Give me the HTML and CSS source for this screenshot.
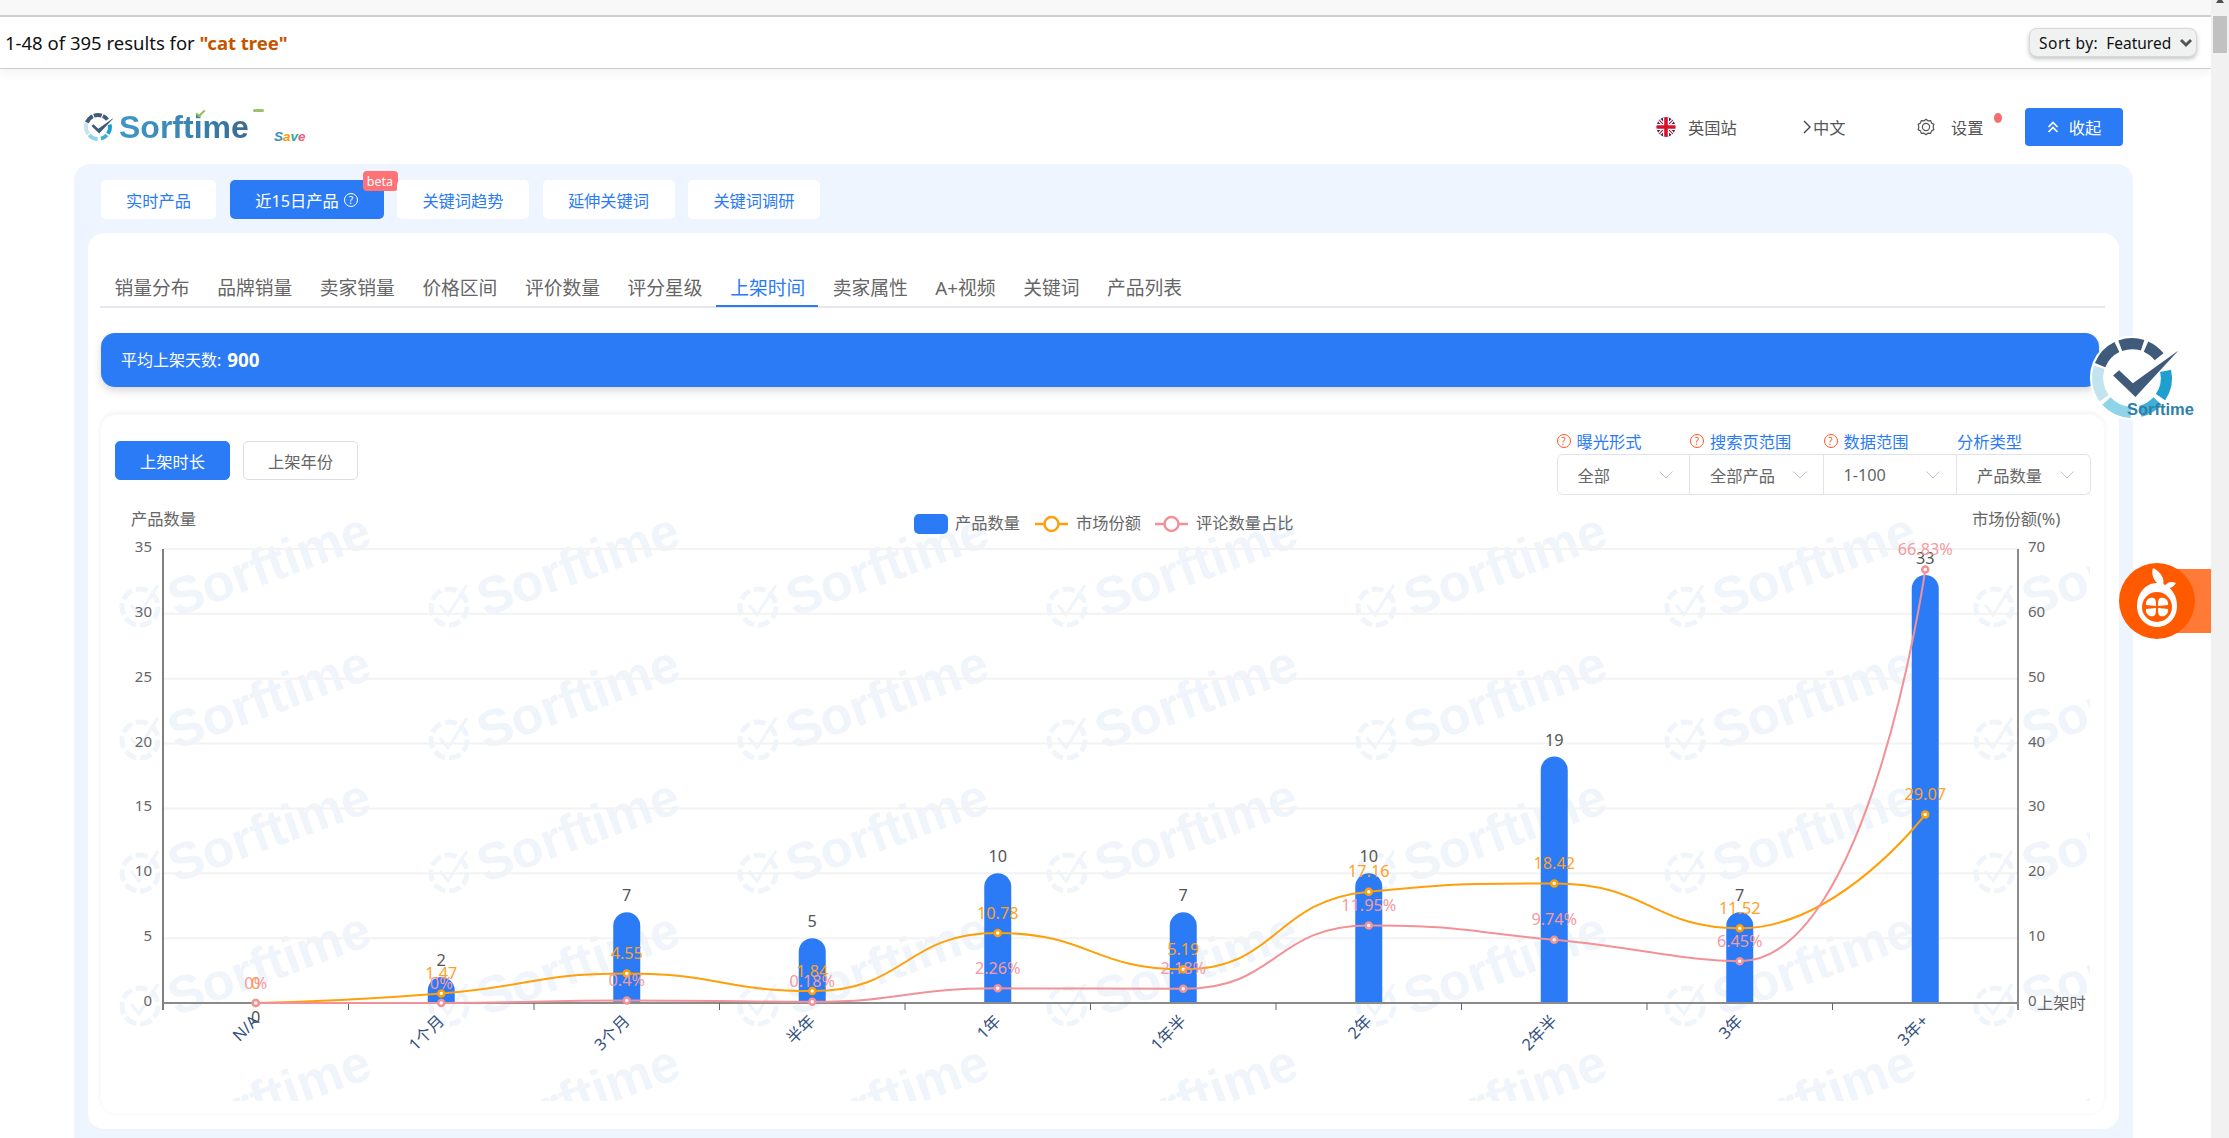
FILE: index.html
```html
<!DOCTYPE html>
<html lang="en">
<head>
  <meta charset="UTF-8">
  <title>Sorftime</title>
  <link rel="stylesheet" href="styles.css">
</head>
<body>

  <svg class="defs" width="0" height="0">
    <symbol id="ring" viewBox="0 0 100 100" overflow="visible">
      <g fill="none" stroke-width="13">
        <circle cx="50" cy="50" r="40" pathLength="360" stroke="#3f5a7a" stroke-dasharray="42 318" transform="rotate(202 50 50)"/>
        <circle cx="50" cy="50" r="40" pathLength="360" stroke="#3f5a7a" stroke-dasharray="38 322" transform="rotate(250 50 50)"/>
        <circle cx="50" cy="50" r="40" pathLength="360" stroke="#3f5a7a" stroke-dasharray="28 332" transform="rotate(294 50 50)"/>
        <circle cx="50" cy="50" r="40" pathLength="360" stroke="#1f9fcf" stroke-dasharray="46 314" transform="rotate(-12 50 50)"/>
        <circle cx="50" cy="50" r="40" pathLength="360" stroke="#41aed6" stroke-dasharray="34 326" transform="rotate(42 50 50)"/>
        <circle cx="50" cy="50" r="40" pathLength="360" stroke="#8fd3e8" stroke-dasharray="46 314" transform="rotate(92 50 50)"/>
        <circle cx="50" cy="50" r="40" pathLength="360" stroke="#c3e3ee" stroke-dasharray="54 306" transform="rotate(144 50 50)"/>
      </g>
      <path d="M28 47L35 41L51 56L104 18L54 72Z" fill="#3f5a7a"/>
    </symbol>
  </svg>

  <div class="page">
    <div class="top-strip"></div>

    <div class="result-bar">
      <span>1-48 of 395 results for <b class="keyword">"cat tree"</b></span>
      <div class="sort-box">
        <span class="sort-label">Sort by:</span><span>Featured</span>
        <svg width="14" height="10" viewBox="0 0 14 10"><polyline points="2,2 7,7 12,2" fill="none" stroke="#555" stroke-width="3"/></svg>
      </div>
    </div>

    <div class="plugin">
      <div class="plugin-head">
        <div class="logo">
          <svg class="logo-ring" width="30" height="30"><use href="#ring"/></svg>
          <span class="logo-text">Sorftime</span>
          <span class="logo-tick"></span>
          <span class="logo-dash"></span>
          <span class="logo-save"><i>S</i><i>a</i><i>v</i><i>e</i></span>
        </div>

        <div class="head-right">
          <div class="head-item site">
            <svg width="20" height="20" viewBox="0 0 20 20">
              <defs><clipPath id="flagClip"><ellipse cx="10" cy="10" rx="9.5" ry="10"/></clipPath></defs>
              <g clip-path="url(#flagClip)">
                <rect width="20" height="20" fill="#27306b"/>
                <path d="M0 0L20 20M20 0L0 20" stroke="#fff" stroke-width="3.6"/>
                <path d="M0 0L20 20M20 0L0 20" stroke="#d8112b" stroke-width="1.2"/>
                <path d="M10 0V20M0 10H20" stroke="#fff" stroke-width="6"/>
                <path d="M10 0V20M0 10H20" stroke="#d8112b" stroke-width="3.6"/>
              </g>
            </svg>
            <span>英国站</span>
          </div>
          <div class="head-item lang">
            <svg width="8" height="14" viewBox="0 0 8 14"><polyline points="1,1 7,7 1,13" fill="none" stroke="#444" stroke-width="1.4"/></svg>
            <span>中文</span>
          </div>
          <div class="head-item setting">
            <svg width="18" height="18" viewBox="0 0 18 18" fill="none" stroke="#555" stroke-width="1.2">
              <path d="M9 1.2L11 2.8L13.6 2.6L14.6 5L16.8 6.4L16.2 9L16.8 11.6L14.6 13L13.6 15.4L11 15.2L9 16.8L7 15.2L4.4 15.4L3.4 13L1.2 11.6L1.8 9L1.2 6.4L3.4 5L4.4 2.6L7 2.8Z"/>
              <circle cx="9" cy="9" r="3.6"/>
            </svg>
            <span>设置</span>
            <i class="red-dot"></i>
          </div>
          <button class="fold-btn">
            <svg width="12" height="14" viewBox="0 0 12 14"><path d="M1.5 7L6 2.5L10.5 7M1.5 12L6 7.5L10.5 12" fill="none" stroke="#fff" stroke-width="1.7"/></svg>
            收起
          </button>
        </div>
      </div>

      <div class="panel">
        <div class="main-tabs">
          <div class="main-tab w1">实时产品</div>
          <div class="main-tab active w2">近15日产品 <i class="q-icon white">?</i><span class="beta">beta</span></div>
          <div class="main-tab w3">关键词趋势</div>
          <div class="main-tab w3">延伸关键词</div>
          <div class="main-tab w3">关键词调研</div>
        </div>

        <div class="card">
          <div class="sub-tabs">
            <div class="sub-tab">销量分布</div>
            <div class="sub-tab">品牌销量</div>
            <div class="sub-tab">卖家销量</div>
            <div class="sub-tab">价格区间</div>
            <div class="sub-tab">评价数量</div>
            <div class="sub-tab">评分星级</div>
            <div class="sub-tab active">上架时间</div>
            <div class="sub-tab">卖家属性</div>
            <div class="sub-tab">A+视频</div>
            <div class="sub-tab">关键词</div>
            <div class="sub-tab">产品列表</div>
          </div>

          <div class="avg-bar">平均上架天数: <b>900</b></div>

          <div class="chart-card">
            <div class="chart-top">
              <div class="range-btns">
                <button class="range-btn active">上架时长</button>
                <button class="range-btn">上架年份</button>
              </div>
              <div class="filters">
                <div class="filter-label"><i class="q-icon">?</i>曝光形式</div>
                <div class="filter-label"><i class="q-icon">?</i>搜索页范围</div>
                <div class="filter-label"><i class="q-icon">?</i>数据范围</div>
                <div class="filter-label">分析类型</div>
                <div class="select"><span>全部</span><svg width="14" height="8" viewBox="0 0 14 8"><polyline points="0.5,0.5 7,7 13.5,0.5" fill="none" stroke="#c0c4cc"/></svg></div>
                <div class="select"><span>全部产品</span><svg width="14" height="8" viewBox="0 0 14 8"><polyline points="0.5,0.5 7,7 13.5,0.5" fill="none" stroke="#c0c4cc"/></svg></div>
                <div class="select"><span>1-100</span><svg width="14" height="8" viewBox="0 0 14 8"><polyline points="0.5,0.5 7,7 13.5,0.5" fill="none" stroke="#c0c4cc"/></svg></div>
                <div class="select"><span>产品数量</span><svg width="14" height="8" viewBox="0 0 14 8"><polyline points="0.5,0.5 7,7 13.5,0.5" fill="none" stroke="#c0c4cc"/></svg></div>
              </div>
            </div>
            <svg id="chart" class="chart" viewBox="105 500 1985 601"></svg>
          </div>
        </div>
      </div>
    </div>
  </div>

  <div class="scrollbar"><div class="scroll-thumb"></div></div>

  <div class="float-logo">
    <svg width="86" height="86" viewBox="0 0 100 100" overflow="visible">
      <circle cx="50" cy="50" r="49" fill="#fff"/>
      <use href="#ring" width="100" height="100"/>
    </svg>
    <span class="float-name">Sorftime</span>
  </div>

  <div class="orange-tab"></div>
  <div class="orange-btn">
    <svg width="76" height="76" viewBox="0 0 76 76">
      <path d="M38 20C50 20 58 31 58 43C58 55 49 64 38 64C27 64 18 55 18 43C18 31 26 20 38 20Z" fill="#fff"/>
      <circle cx="38" cy="44" r="15" fill="#ff5a00"/>
      <g fill="#fff">
        <path d="M37 43L27 42C26 35 34 33 36 36C37 38 37 40 37 43Z"/>
        <path d="M39 43L49 42C50 35 42 33 40 36C39 38 39 40 39 43Z"/>
        <path d="M37 45L27 46C26 53 34 55 36 52C37 50 37 48 37 45Z"/>
        <path d="M39 45L49 46C50 53 42 55 40 52C39 50 39 48 39 45Z"/>
      </g>
      <path d="M34 5C42 9 46 15 44 24C37 21 31 13 34 5Z" fill="#fff"/>
      <path d="M45 24C48 19 52 18 57 20C54 25 50 26 45 24Z" fill="#fff"/>
    </svg>
  </div>

  <script src="chart.js"></script>
</body>
</html>
```

FILE: styles.css
```css
* {
  box-sizing: border-box;
}

body {
  margin: 0;
  height: 100vh;
  display: flex;
  overflow: hidden;
  position: relative;
  background-color: #fff;
  font-family: "Noto Sans", "Noto Sans CJK SC", sans-serif;
  font-size: 16.25px;
  color: #666;
}

.defs {
  position: absolute;
}

.page {
  flex: 1;
  min-width: 0;
}

.top-strip {
  height: 17px;
  background-color: #f8f8f8;
  border-bottom: 2px solid #cfcfcf;
}

.result-bar {
  height: 52px;
  display: flex;
  align-items: center;
  justify-content: space-between;
  padding: 0 14px 0 5px;
  background-color: #fff;
  border-bottom: 1px solid #cccccc;
  box-shadow: 0 4px 10px rgba(0, 0, 0, 0.05);
  font-size: 18.5px;
  color: #0f1111;
}

.keyword {
  color: #c45500;
}

.sort-box {
  width: 168px;
  height: 29px;
  display: flex;
  align-items: center;
  gap: 8px;
  padding-left: 9px;
  background-color: #f0f2f2;
  border: 1px solid #d5d9d9;
  border-radius: 8px;
  box-shadow: 0 2px 4px rgba(15, 17, 17, 0.25);
  font-size: 15.5px;
}

.sort-label {
  letter-spacing: 0.5px;
}

.plugin {
  padding-top: 39px;
}

.plugin-head {
  height: 38px;
  display: flex;
  align-items: center;
  justify-content: space-between;
  margin: 0 88px 18px 83px;
}

.logo {
  position: relative;
  display: flex;
  align-items: center;
  gap: 6px;
}

.logo-text {
  font-family: "Liberation Sans", sans-serif;
  font-weight: 700;
  font-size: 32px;
  background: linear-gradient(90deg, #3f97c6, #3a86b5 50%, #3a6a90);
  -webkit-background-clip: text;
  background-clip: text;
  color: transparent;
}

.logo-tick {
  position: absolute;
  left: 113px;
  top: 1px;
  width: 9px;
  height: 5px;
  border-left: 2px solid #8cc152;
  border-bottom: 2px solid #8cc152;
  transform: rotate(-45deg);
}

.logo-dash {
  position: absolute;
  left: 170px;
  top: 0;
  width: 11px;
  height: 3px;
  background-color: #9ac36a;
  border-radius: 2px;
}

.logo-save {
  position: absolute;
  left: 191px;
  top: 20px;
  font-family: "Liberation Sans", sans-serif;
  font-size: 13.5px;
  font-weight: 700;
}

.logo-save i:nth-child(1) { color: #3b8fbf; }
.logo-save i:nth-child(2) { color: #ff9800; }
.logo-save i:nth-child(3) { color: #2fa9a0; }
.logo-save i:nth-child(4) { color: #ef5a87; }

.head-right {
  display: flex;
  align-items: center;
}

.head-item {
  display: flex;
  align-items: center;
  color: #555;
}

.site {
  gap: 12px;
  width: 140px;
  margin-right: 7px;
}

.lang {
  gap: 2px;
  width: 114px;
}

.setting {
  position: relative;
  gap: 16px;
  width: 108px;
}

.red-dot {
  position: absolute;
  left: 77px;
  top: -2px;
  width: 8px;
  height: 10px;
  border-radius: 50%;
  background-color: #f56c6c;
}

.fold-btn {
  width: 98px;
  height: 38px;
  display: flex;
  align-items: center;
  justify-content: center;
  gap: 10px;
  border: none;
  border-radius: 4px;
  background-color: #2b7bf6;
  color: #fff;
  font-family: inherit;
  font-size: 16.25px;
}

.panel {
  margin-left: 74px;
  margin-right: 78px;
  height: 1000px;
  padding: 16px 14px 0;
  background-color: #eff5fe;
  border-radius: 16px;
}

.main-tabs {
  display: flex;
  gap: 13.5px;
  height: 39px;
  margin: 0 0 14px 13px;
}

.main-tab {
  position: relative;
  height: 39px;
  display: flex;
  align-items: center;
  justify-content: center;
  background-color: #fff;
  border-radius: 5px;
  color: #2b7bf6;
}

.w1 { width: 115px; }
.w2 { width: 154px; gap: 5px; }
.w3 { width: 132px; }

.main-tab.active {
  background-color: #2b7bf6;
  color: #fff;
}

.beta {
  position: absolute;
  right: -14px;
  top: -9px;
  width: 35px;
  height: 20px;
  display: flex;
  align-items: center;
  justify-content: center;
  background-color: #ff7276;
  border-radius: 4px;
  color: #fff;
  font-size: 12.5px;
}

.q-icon {
  width: 14px;
  height: 14px;
  flex: none;
  display: inline-flex;
  align-items: center;
  justify-content: center;
  border: 1px solid #ff5722;
  border-radius: 50%;
  color: #ff5722;
  font-size: 10px;
  font-style: normal;
}

.q-icon.white {
  border-color: #fff;
  color: #fff;
}

.card {
  height: 896px;
  padding: 34px 14px 0 12px;
  background-color: #fff;
  border-radius: 16px;
}

.sub-tabs {
  display: flex;
  height: 41px;
  border-bottom: 2px solid #e4e7ed;
}

.sub-tab {
  height: 40px;
  padding: 0 13px 0 14.6px;
  display: flex;
  align-items: center;
  border-bottom: 2px solid transparent;
  font-size: 18.75px;
}

.sub-tab.active {
  color: #2b7bf6;
  border-bottom-color: #2b7bf6;
}

.avg-bar {
  height: 54px;
  display: flex;
  align-items: center;
  gap: 6px;
  margin: 25px 6px 0 1px;
  padding: 0 0 2px 20px;
  background-color: #2b7bf6;
  border-radius: 14px;
  box-shadow: 0 4px 8px rgba(0, 0, 0, 0.15);
  color: #fff;
  font-size: 16px;
}

.avg-bar b {
  font-size: 18.75px;
}

.chart-card {
  height: 701px;
  margin-top: 27px;
  padding-top: 17px;
  border: 1px solid #fafafa;
  border-radius: 16px;
  box-shadow: 0 -2px 4px rgba(0, 0, 0, 0.05);
}

.chart-top {
  height: 63px;
  display: flex;
  justify-content: space-between;
  padding: 0 13.5px 0 14px;
  margin-bottom: 5px;
}

.range-btns {
  display: flex;
  gap: 13px;
  padding-top: 9px;
}

.range-btn {
  width: 115px;
  height: 39px;
  background-color: #fff;
  border: 1px solid #dcdfe6;
  border-radius: 5px;
  color: #666;
  font-family: inherit;
  font-size: 16.25px;
}

.range-btn.active {
  background-color: #2b7bf6;
  border-color: #2b7bf6;
  color: #fff;
}

.filters {
  width: 534px;
  display: grid;
  grid-template-columns: repeat(4, 1fr);
  grid-template-rows: 22px 41px;
  position: relative;
}

.filter-label {
  display: flex;
  align-items: center;
  gap: 6px;
  padding-bottom: 5px;
  color: #2b7bf6;
}

.select {
  display: flex;
  align-items: center;
  justify-content: space-between;
  padding: 0 16px 0 20px;
  border: 1px solid #e0e3eb;
  border-left: none;
}

.select:nth-child(5) {
  border-left: 1px solid #e0e3eb;
  border-radius: 6px 0 0 6px;
}

.select:nth-child(8) {
  border-radius: 0 6px 6px 0;
}

.chart {
  display: block;
  width: 1985px;
  height: 601px;
  margin-left: 4px;
}

.wm-text {
  font-family: "Liberation Sans", sans-serif;
  font-size: 52px;
  font-weight: 700;
  fill: #eff5fa;
}

.tick-text {
  font-size: 15px;
  fill: #666;
}

.name-text {
  font-size: 16.25px;
  fill: #666;
}

.bar-text {
  font-size: 16.25px;
  fill: #555;
  text-anchor: middle;
}

.cat-text {
  font-size: 16.25px;
  fill: #35527e;
  text-anchor: end;
}

.scrollbar {
  width: 18px;
  flex: none;
  padding: 16px 2px 0 2px;
  background-color: #f1f1f1;
  position: relative;
}

.scrollbar::before {
  content: "";
  position: absolute;
  left: 5px;
  top: -3px;
  border-left: 4px solid transparent;
  border-right: 4px solid transparent;
  border-bottom: 6px solid #505050;
}

.scroll-thumb {
  height: 37px;
  background-color: #c1c1c1;
}

.float-logo {
  position: absolute;
  left: 2089px;
  top: 335px;
  width: 110px;
  height: 86px;
}

.float-name {
  position: absolute;
  left: 38px;
  top: 65px;
  font-family: "Liberation Sans", sans-serif;
  font-weight: 700;
  font-size: 16.5px;
  color: #2f7fa8;
}

.orange-tab {
  position: absolute;
  left: 2177px;
  top: 569px;
  width: 34px;
  height: 64px;
  background-color: #ff7a36;
}

.orange-btn {
  position: absolute;
  left: 2119px;
  top: 563px;
  width: 76px;
  height: 76px;
  border-radius: 50%;
  background-color: #ff5a00;
}
```

FILE: chart.js
```js
const svg = document.getElementById('chart');
const NS = 'http://www.w3.org/2000/svg';

const cats = ['N/A', '1个月', '3个月', '半年', '1年', '1年半', '2年', '2年半', '3年', '3年+'];
const counts = [0, 2, 7, 5, 10, 7, 10, 19, 7, 33];
const share = [0, 1.47, 4.55, 1.84, 10.78, 5.19, 17.16, 18.42, 11.52, 29.07];
const reviews = [0, 0, 0.4, 0.18, 2.26, 2.18, 11.95, 9.74, 6.45, 66.83];

const axisLeft = 163, axisRight = 2018, axisTop = 549, base = 1003;
const band = (axisRight - axisLeft) / cats.length;
const unitL = (base - axisTop) / 35;
const unitR = (base - axisTop) / 70;

function add(tag, attrs, text, parent) {
  const node = document.createElementNS(NS, tag);
  for (const k in attrs) node.setAttribute(k, attrs[k]);
  if (text !== undefined) node.textContent = text;
  (parent || svg).appendChild(node);
  return node;
}

function cx(i) {
  return axisLeft + band * (i + 0.5);
}

// watermark
const defs = add('defs', {});
const clip = add('clipPath', { id: 'wmClip' }, undefined, defs);
add('rect', { x: 105, y: 510, width: 1985, height: 591 }, undefined, clip);
const wm = add('g', { 'clip-path': 'url(#wmClip)' });
for (let row = 0; row < 5; row++) {
  for (let col = 0; col < 7; col++) {
    const x = 140 + col * 309, y = 607 + row * 133;
    const inner = add('g', { transform: `translate(${x} ${y})` }, undefined, wm);
    add('circle', { r: 18, fill: 'none', stroke: '#eff5fa', 'stroke-width': 5, 'stroke-dasharray': '12 4' }, undefined, inner);
    add('path', { d: 'M-9 -2L-1 8L18 -22', fill: 'none', stroke: '#eff5fa', 'stroke-width': 3 }, undefined, inner);
    add('text', { x: 36, y: 10, class: 'wm-text', transform: 'rotate(-20 36 10)' }, 'Sorftime', inner);
  }
}

// grid
for (let i = 1; i <= 7; i++) {
  const y = base - i * 5 * unitL;
  add('line', { x1: axisLeft, x2: axisRight, y1: y, y2: y, stroke: '#f3f3f3', 'stroke-width': 2 });
}

// bars
counts.forEach((v, i) => {
  if (!v) return;
  const x = cx(i) - 13.5, y = base - v * unitL;
  add('path', { d: `M${x} ${base}V${y + 13.5}A13.5 13.5 0 0 1 ${x + 27} ${y + 13.5}V${base}Z`, fill: '#2b7bf6' });
});

// axes
add('line', { x1: axisLeft, x2: axisLeft, y1: axisTop, y2: 1010, stroke: '#555', 'stroke-width': 1.5 });
add('line', { x1: axisRight, x2: axisRight, y1: axisTop, y2: 1010, stroke: '#666', 'stroke-width': 1.5 });
add('line', { x1: axisLeft, x2: axisRight, y1: base, y2: base, stroke: '#8a8a8a', 'stroke-width': 2 });
for (let i = 1; i < cats.length; i++) {
  const x = axisLeft + band * i;
  add('line', { x1: x, x2: x, y1: base, y2: 1010, stroke: '#666' });
}

for (let i = 0; i <= 7; i++) {
  const y = base - i * 5 * unitL;
  add('text', { x: 152, y: y + 3, class: 'tick-text', 'text-anchor': 'end' }, i * 5);
  add('text', { x: 2028, y: y + 3, class: 'tick-text' }, i * 10);
}
add('text', { x: 131, y: 525, class: 'name-text' }, '产品数量');
add('text', { x: 1972, y: 525, class: 'name-text' }, '市场份额(%)');
add('text', { x: 2037, y: 1009, class: 'name-text' }, '上架时');

// smooth path, same idea as echarts' smooth: 0.5
function smoothPath(pts) {
  const cps = pts.map(() => ({}));
  const s = 0.5;
  const clamp = (v, a, b) => Math.min(Math.max(v, Math.min(a, b)), Math.max(a, b));
  pts.forEach((p, i) => {
    const prev = pts[i - 1] || p, next = pts[i + 1] || p;
    if (i === 0 || i === pts.length - 1) {
      cps[i] = { ix: p[0], iy: p[1], ox: p[0], oy: p[1] };
      return;
    }
    const lenP = Math.hypot(p[0] - prev[0], p[1] - prev[1]);
    const lenN = Math.hypot(next[0] - p[0], next[1] - p[1]);
    const r = lenN / (lenN + lenP);
    let ox = clamp(p[0] + (next[0] - prev[0]) * s * r, p[0], next[0]);
    let oy = clamp(p[1] + (next[1] - prev[1]) * s * r, p[1], next[1]);
    let ix = clamp(p[0] - (ox - p[0]) * lenP / lenN, prev[0], p[0]);
    let iy = clamp(p[1] - (oy - p[1]) * lenP / lenN, prev[1], p[1]);
    ox = clamp(p[0] + (p[0] - ix) * lenN / lenP, p[0], next[0]);
    oy = clamp(p[1] + (p[1] - iy) * lenN / lenP, p[1], next[1]);
    cps[i] = { ix, iy, ox, oy };
  });
  let d = `M${pts[0][0]} ${pts[0][1]}`;
  for (let i = 1; i < pts.length; i++) {
    d += `C${cps[i - 1].ox} ${cps[i - 1].oy} ${cps[i].ix} ${cps[i].iy} ${pts[i][0]} ${pts[i][1]}`;
  }
  return d;
}

function drawLine(values, color) {
  const pts = values.map((v, i) => [cx(i), base - v * unitR]);
  add('path', { d: smoothPath(pts), fill: 'none', stroke: color, 'stroke-width': 2 });
  return pts;
}

const orange = '#ff9f0a', pink = '#f29297';
const ptsS = drawLine(share, orange);
const ptsR = drawLine(reviews, pink);

ptsS.forEach(p => add('circle', { cx: p[0], cy: p[1], r: 3, fill: '#fff', stroke: orange, 'stroke-width': 2.5 }));
ptsR.forEach(p => add('circle', { cx: p[0], cy: p[1], r: 3, fill: '#fff', stroke: pink, 'stroke-width': 2.5 }));

// labels
counts.forEach((v, i) => {
  const y = v ? base - v * unitL - 11 : 1023;
  add('text', { x: cx(i), y, class: 'bar-text' }, v);
});
share.forEach((v, i) => {
  add('text', { x: ptsS[i][0], y: ptsS[i][1] - 14.5, class: 'bar-text', style: 'fill:#ffa126' }, v);
});
reviews.forEach((v, i) => {
  add('text', { x: ptsR[i][0], y: ptsR[i][1] - 14.5, class: 'bar-text', style: 'fill:#f59a9e' }, v + '%');
});

cats.forEach((c, i) => {
  const x = cx(i) + 4, y = 1022;
  add('text', { x, y, class: 'cat-text', transform: `rotate(-45 ${x} ${y})` }, c);
});

// legend
add('rect', { x: 914, y: 514, width: 34, height: 20, rx: 5, fill: '#2b7bf6' });
add('text', { x: 955, y: 529, class: 'name-text' }, '产品数量');
add('line', { x1: 1035, x2: 1068, y1: 524, y2: 524, stroke: orange, 'stroke-width': 2.5 });
add('circle', { cx: 1051.5, cy: 524, r: 7, fill: '#fff', stroke: orange, 'stroke-width': 2.5 });
add('text', { x: 1076, y: 529, class: 'name-text' }, '市场份额');
add('line', { x1: 1155, x2: 1188, y1: 524, y2: 524, stroke: pink, 'stroke-width': 2.5 });
add('circle', { cx: 1171.5, cy: 524, r: 7, fill: '#fff', stroke: pink, 'stroke-width': 2.5 });
add('text', { x: 1196, y: 529, class: 'name-text' }, '评论数量占比');
```
